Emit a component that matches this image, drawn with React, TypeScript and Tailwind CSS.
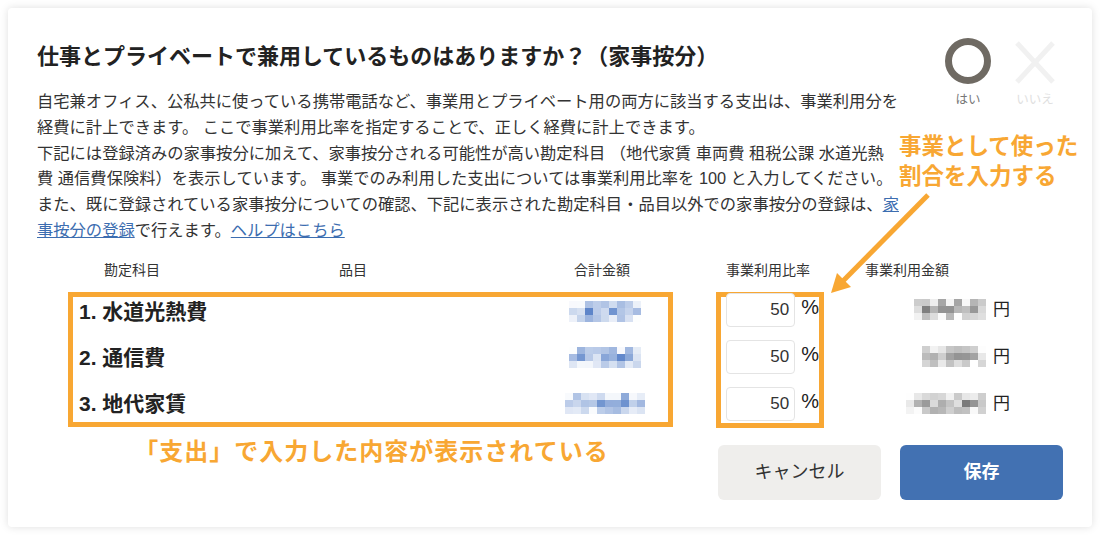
import React from "react";

const ORANGE = "#f8a733";

function hash(n: number) {
  let x = Math.imul(n ^ 0x9e3779b9, 2654435761) >>> 0;
  x ^= x >>> 15;
  x = Math.imul(x, 2246822519) >>> 0;
  x ^= x >>> 13;
  return (x % 1000) / 1000;
}

function Mosaic({ w, seed, tone }: { w: number; seed: number; tone: "blue" | "gray" }) {
  const cols = Math.round(w / 8);
  const rows = [0, 1, 2];
  const base = tone === "blue" ? [84, 126, 198] : [122, 122, 122];
  return (
    <div className="flex flex-col blur-[0.4px]">
      {rows.map((r) => (
        <div key={r} className="flex">
          {Array.from({ length: cols }).map((_, c) => {
            const v = hash(seed * 1000 + r * 100 + c);
            let k = r === 1 ? 0.6 + 0.4 * v : 0.35 + 0.35 * v;
            if (r === 2) k *= 0.85;
            if (c === 0 || c === cols - 1) k *= 0.6;
            const col = base.map((b) => Math.round(255 - (255 - b) * k));
            return (
              <div
                key={c}
                className="w-[8px] h-[7px]"
                style={{ backgroundColor: `rgb(${col[0]},${col[1]},${col[2]})` }}
              />
            );
          })}
        </div>
      ))}
    </div>
  );
}

const rows = [
  { label: "1. 水道光熱費", bw: 72, gw: 72 },
  { label: "2. 通信費", bw: 72, gw: 64 },
  { label: "3. 地代家賃", bw: 80, gw: 80 },
];

export default function App() {
  return (
    <div className="min-h-[535px] bg-white p-[8px] [font-family:'Liberation_Sans','Noto_Sans_CJK_JP',sans-serif] text-[#333]">
      <div className="relative w-[1084px] h-[519px] rounded-[4px] bg-white shadow-[0_0_9px_rgba(0,0,0,0.13)] pt-[34px] pl-[29px]">
        {/* header */}
        <div className="flex items-start">
          <div className="w-[880px]">
            <h1 className="text-[22px] leading-[30px] font-bold text-[#222] whitespace-nowrap">
              仕事とプライベートで兼用しているものはありますか？（家事按分）
            </h1>
            <p className="mt-[17px] text-[16.3px] leading-[25.8px] text-[#333] whitespace-nowrap">
              自宅兼オフィス、公私共に使っている携帯電話など、事業用とプライベート用の両方に該当する支出は、事業利用分を
              <br />
              経費に計上できます。 ここで事業利用比率を指定することで、正しく経費に計上できます。
              <br />
              下記には登録済みの家事按分に加えて、家事按分される可能性が高い勘定科目 （地代家賃 車両費 租税公課 水道光熱
              <br />
              費 通信費保険料）を表示しています。 事業でのみ利用した支出については事業利用比率を 100 と入力してください。
              <br />
              また、既に登録されている家事按分についての確認、下記に表示された勘定科目・品目以外での家事按分の登録は、
              <a className="text-[#3c6db0] underline" href="#">
                家
                <br />
                事按分の登録
              </a>
              で行えます。
              <a className="text-[#3c6db0] underline" href="#">
                ヘルプはこちら
              </a>
            </p>
          </div>
          <div className="ml-[26px] -mt-[4px] flex gap-[17px]">
            <div className="w-[50px] flex flex-col items-center">
              <svg width="46" height="46" viewBox="0 0 46 46">
                <circle cx="23" cy="23" r="19.5" fill="none" stroke="#6f6a63" strokeWidth="7" />
              </svg>
              <span className="mt-[9px] text-[12.5px] leading-[14px] text-[#777] whitespace-nowrap">はい</span>
            </div>
            <div className="w-[50px] flex flex-col items-center">
              <svg width="46" height="46" viewBox="0 0 46 46">
                <line x1="5" y1="5" x2="41" y2="44" stroke="#f1f1f1" strokeWidth="5" />
                <line x1="41" y1="5" x2="5" y2="44" stroke="#f1f1f1" strokeWidth="5" />
              </svg>
              <span className="mt-[9px] text-[12.5px] leading-[14px] text-[#e0e0e0] whitespace-nowrap">いいえ</span>
            </div>
          </div>
        </div>

        {/* table */}
        <div className="mt-[16px] ml-[31px]">
          <div className="flex text-[14px] leading-[20px] text-[#333] whitespace-nowrap">
            <div className="w-[128px] text-center">勘定科目</div>
            <div className="w-[314px] text-center">品目</div>
            <div className="w-[184px] text-center">合計金額</div>
            <div className="w-[148px] text-center">事業利用比率</div>
            <div className="w-[130px] text-center">事業利用金額</div>
          </div>

          <div className="mt-[12px] flex items-start">
            <div className="w-[605px] flex flex-col">
              <div className="h-[135px] border-[5px] border-[#f8a733] flex flex-col gap-[16px] pl-[6px]">
                {rows.map((r, i) => (
                  <div key={i} className="h-[30px] flex items-center">
                    <div className="flex-1 text-[21px] font-bold leading-[30px] text-[#222] whitespace-nowrap">
                      {r.label}
                    </div>
                    <div className="w-[124px] mr-[1px] flex justify-center">
                      <Mosaic w={r.bw} seed={i + 1} tone="blue" />
                    </div>
                  </div>
                ))}
              </div>
              <div className="mt-[7px] pl-[2px] text-center text-[24px] font-bold leading-[36px] tracking-[1px] text-[#f8a733] whitespace-nowrap">
                「支出」で入力した内容が表示されている
              </div>
            </div>

            <div className="ml-[43px] flex flex-col">
              <div className="flex items-start">
                <div className="w-[108px] h-[136px] border-[5px] border-[#f8a733] pl-[5px]">
                  <div className="-mt-[4px] flex flex-col gap-[13px]">
                    {rows.map((_, i) => (
                      <div key={i} className="flex items-start">
                        <div className="w-[70px] h-[34px] rounded-[4px] border border-[#e4e4e4] bg-white flex items-center justify-end pr-[5px] text-[17px] text-[#333]">
                          50
                        </div>
                        <span className="ml-[6px] text-[20px] leading-[28px] text-[#222]">%</span>
                      </div>
                    ))}
                  </div>
                </div>
                <div className="w-[188px] mt-[1px] flex flex-col gap-[13px] pr-[2px]">
                  {rows.map((r, i) => (
                    <div key={i} className="h-[34px] flex items-center justify-end gap-[7px]">
                      <Mosaic w={r.gw} seed={i + 11} tone="gray" />
                      <span className="text-[17px] leading-[20px] text-[#222]">円</span>
                    </div>
                  ))}
                </div>
              </div>
              <div className="mt-[17px] ml-[2px] flex gap-[19px]">
                <button className="w-[163px] h-[55px] rounded-[6px] bg-[#efeeec] text-[18px] text-[#333]">
                  キャンセル
                </button>
                <button className="w-[163px] h-[55px] rounded-[6px] bg-[#4271b2] text-[18px] font-bold text-white">
                  保存
                </button>
              </div>
            </div>
          </div>
        </div>

        {/* annotation overlay */}
        <div className="absolute left-[891px] top-[124px] text-[22.5px] font-bold leading-[30px] text-[#f8a733] whitespace-nowrap">
          事業として使った
          <br />
          割合を入力する
        </div>
        <svg
          className="absolute left-[812px] top-[177px]"
          width="120"
          height="123"
          viewBox="0 0 120 123"
        >
          <line x1="108" y1="10" x2="22" y2="97" stroke={ORANGE} strokeWidth="5" />
          <polygon points="11,108 31,102 17,88" fill={ORANGE} />
        </svg>
      </div>
    </div>
  );
}
